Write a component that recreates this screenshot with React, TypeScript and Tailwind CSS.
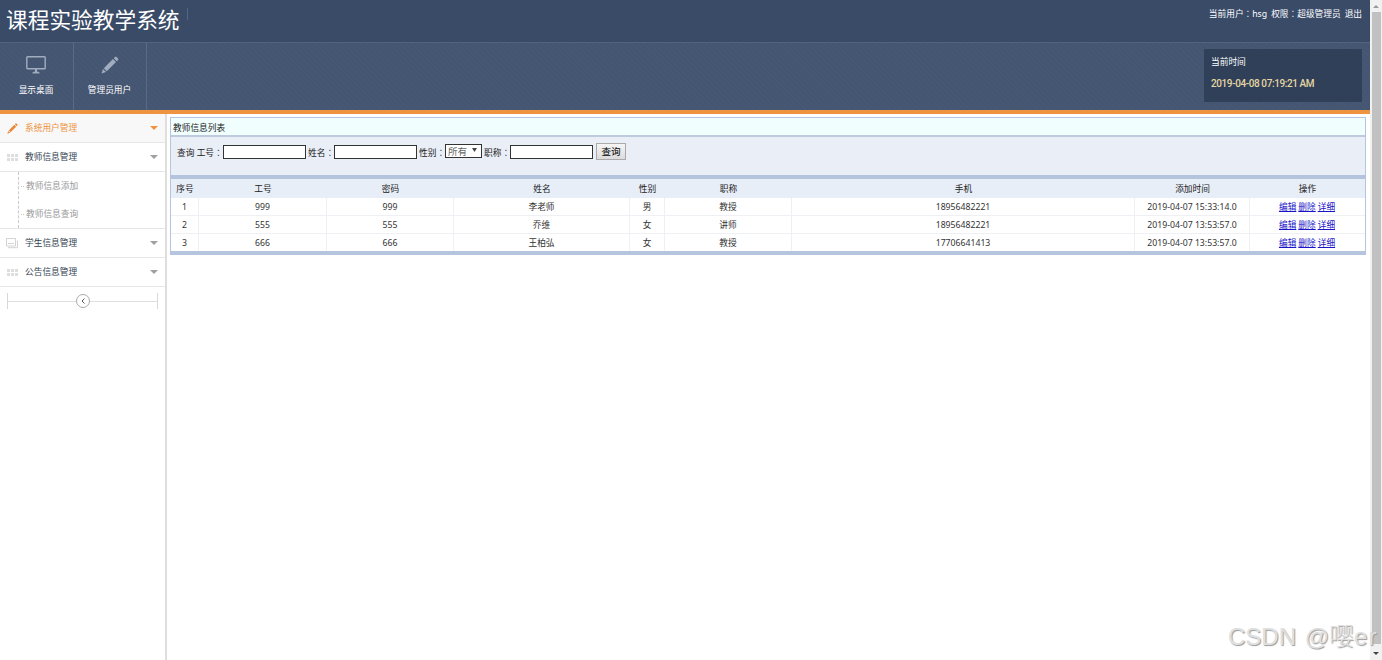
import React from "react";

type MenuIcon = "pencil" | "grid" | "stack";

type MenuItem = {
  label: string;
  icon: MenuIcon;
  active?: boolean;
  children?: string[];
};

const menu: MenuItem[] = [
  { label: "系统用户管理", icon: "pencil", active: true },
  { label: "教师信息管理", icon: "grid", children: ["教师信息添加", "教师信息查询"] },
  { label: "学生信息管理", icon: "stack" },
  { label: "公告信息管理", icon: "grid" },
];

const columns = ["序号", "工号", "密码", "姓名", "性别", "职称", "手机", "添加时间", "操作"];

const teachers = [
  ["1", "999", "999", "李老师", "男", "教授", "18956482221", "2019-04-07 15:33:14.0"],
  ["2", "555", "555", "乔维", "女", "讲师", "18956482221", "2019-04-07 13:53:57.0"],
  ["3", "666", "666", "王柏弘", "女", "教授", "17706641413", "2019-04-07 13:53:57.0"],
];

const rowGrid = "grid grid-cols-[28px_128px_127px_176px_35px_127px_343px_115px_115px]";

const Pencil: React.FC<{ className: string }> = ({ className }) => (
  <svg viewBox="0 0 18 18" className={className} fill="currentColor">
    <path d="M0.500 17.500l1.500-4.500 3 3z" />
    <path d="M2.800 12.200L12 3l3 3-9.200 9.200z" />
    <path d="M12.800 2.200l1.200-1.200c.5-.5 1.100-.5 1.600 0l1.400 1.400c.5.5.5 1.100 0 1.600l-1.200 1.200z" />
  </svg>
);

const Monitor = () => (
  <svg viewBox="0 0 20 18" className="h-[18px] w-5" fill="none" stroke="currentColor">
    <rect x="0.8" y="0.8" width="18.4" height="12" rx="0.8" strokeWidth="1.4" />
    <path d="M10 13v3" strokeWidth="2" />
    <path d="M6.500 17.200c0-1.200 2-1.400 3.500-1.400s3.500.2 3.500 1.400z" fill="currentColor" strokeWidth="0.4" />
  </svg>
);

const ItemIcon: React.FC<{ icon: MenuIcon }> = ({ icon }) => {
  if (icon === "pencil") return <Pencil className="ml-px size-[11px] text-[#e8893a]" />;
  if (icon === "grid") {
    return (
      <svg viewBox="0 0 11 7" className="ml-px h-[7px] w-[11px]" fill="#dedede">
        <path d="M0 0h3v3H0zM4 0h3v3H4zM8 0h3v3H8zM0 4h3v3H0zM4 4h3v3H4zM8 4h3v3H8z" />
      </svg>
    );
  }
  return (
    <svg viewBox="0 0 12 11" className="h-[11px] w-3" fill="none" stroke="#d3d3d3">
      <path d="M.5.5h9v7.500h-9zM2 9.700h9.500V2.500M2 5.500h6" />
    </svg>
  );
};

const Colon = () => <span className="font-['Noto_Sans_CJK_TC',sans-serif]">：</span>;

const Header = () => (
  <header className="h-[114px] border-b-4 border-[#ee9340] bg-[#455673] text-white">
    <div className="flex h-[42px] justify-between bg-[#3a4b68]">
      <div className="flex">
        <h1 className="ml-[6px] pt-1 text-[21.7px] leading-[31px] whitespace-nowrap">课程实验教学系统</h1>
        <div className="mt-2 ml-[7px] h-3 w-px bg-[#52668a]" />
      </div>
      <div className="flex gap-1 pt-2 pr-[8px] leading-3 whitespace-nowrap">
        <span>当前用户<Colon />hsg</span>
        <span>权限<Colon />超级管理员</span>
        <span>退出</span>
      </div>
    </div>
    <div className="flex h-[68px] justify-between border-t border-[#52637f] bg-[repeating-linear-gradient(45deg,#44556f_0px,#465876_2px,#44556f_4px)]">
      <nav className="flex">
        <a className="flex w-[74px] flex-col items-center border-r border-[#5a6a84] pt-[13px] pr-px text-[#a1adbf]">
          <Monitor />
          <span className="mt-[10px] leading-3 text-white">显示桌面</span>
        </a>
        <a className="flex w-[73px] flex-col items-center border-r border-[#5a6a84] pt-[13px] pr-px text-[#a1adbf]">
          <Pencil className="size-[18px]" />
          <span className="mt-[10px] leading-3 text-white">管理员用户</span>
        </a>
      </nav>
      <div className="mt-[6px] mr-2 h-[53px] w-[158px] bg-[#304059] pt-[7px] pl-[7px]">
        <p className="leading-3">当前时间</p>
        <p className="mt-[10px] font-['Roboto',sans-serif] text-[10px] leading-3 font-medium tracking-[-0.4px] text-[#e6d6a2]">
          2019-04-08 07:19:21 AM
        </p>
      </div>
    </div>
  </header>
);

const Sidebar = () => (
  <aside className="h-[546px] w-[167px] shrink-0 border-r-2 border-[#dedede]">
    {menu.map((item) => (
      <div key={item.label}>
        <div
          className={
            item.active
              ? "flex h-[29px] items-center border-b border-[#e6e6e6] bg-[#f8f8f8] pr-[7px] pl-[6px] text-[#ee9340]"
              : "flex h-[29px] items-center border-b border-[#e6e6e6] pr-[7px] pl-[6px] text-[#333f52]"
          }
        >
          <span className="w-[19px]"><ItemIcon icon={item.icon} /></span>
          <span className="flex-1 pt-[2px]">{item.label}</span>
          <svg viewBox="0 0 8 4" className={item.active ? "h-1 w-2" : "h-1 w-2 text-[#a0a0a0]"}>
            <path d="M0 0h8L4 4z" fill="currentColor" />
          </svg>
        </div>
        {item.children && (
          <div className="h-[57px] border-b border-[#e6e6e6] pl-[18px] text-[#999]">
            <ul className="h-full border-l border-dashed border-[#c8c8c8]">
              {item.children.map((child) => (
                <li key={child} className="flex h-7 items-center pt-px">
                  <span className="mr-[2px] ml-[2px] w-[3px] border-t border-dotted border-[#c8c8c8]" />
                  {child}
                </li>
              ))}
            </ul>
          </div>
        )}
      </div>
    ))}
    <div className="mx-[7px] mt-[6px] flex h-[16px] items-center border-x border-[#d8d8d8]">
      <div className="h-px flex-1 bg-[#e0e0e0]" />
      <div className="flex size-[14px] items-center justify-center rounded-full border border-[#aaa]">
        <svg viewBox="0 0 4 6" className="h-[6px] w-1" fill="none" stroke="#555">
          <path d="M3.500.5L1 3l2.500 2.500" />
        </svg>
      </div>
      <div className="h-px flex-1 bg-[#e0e0e0]" />
    </div>
  </aside>
);

const TextBox = () => <input className="block h-[14px] w-[83px] border border-[#333] bg-white px-1 outline-none" />;

const SearchBar = () => (
  <form className="flex h-[38px] items-start bg-[#e9eef7] pt-[6px] pl-[6px] whitespace-nowrap text-[#222]">
    <label className="mt-1 w-[46px] leading-3">查询 工号<Colon /></label>
    <div className="mt-[2px]"><TextBox /></div>
    <label className="mt-1 ml-[2px] w-[26px] leading-3">姓名<Colon /></label>
    <div className="mt-[2px]"><TextBox /></div>
    <label className="mt-1 ml-[2px] w-[26px] leading-3">性别<Colon /></label>
    <div className="mt-px flex h-[14px] w-[37px] items-center justify-between border border-[#333] bg-white pt-px pr-1 pl-[2px] text-[9.6px] leading-3 text-[#666]">
      所有
      <svg viewBox="0 0 5 4" className="mb-[3px] h-1 w-[5px]" fill="#444">
        <path d="M0 0h5L2.500 4z" />
      </svg>
    </div>
    <label className="mt-1 ml-[2px] w-[26px] leading-3">职称<Colon /></label>
    <div className="mt-[2px]"><TextBox /></div>
    <button
      type="button"
      className="ml-[3px] h-[17px] w-[30px] border border-[#aaa] bg-linear-to-b from-[#f5f5f5] to-[#dcdcdc] text-[9.6px] leading-[16px] text-black"
    >
      查询
    </button>
  </form>
);

const TeacherList = () => (
  <section className="mt-[3px] ml-[3px] h-[138px] w-[1196px] border-x border-t border-b-4 border-[#b4c5dd]">
    <h2 className="h-[19px] border-b-2 border-[#bdcbdc] bg-[#f0fffe] pl-[2px] leading-[20px] text-[#222]">教师信息列表</h2>
    <SearchBar />
    <div className="h-1 bg-[#b3c4dc]" />
    <div className={`${rowGrid} h-[19px] bg-[#e8eef8] text-center leading-[20px] text-[#222]`}>
      {columns.map((name) => (
        <div key={name}>{name}</div>
      ))}
    </div>
    {teachers.map((row) => (
      <div key={row[0]} className={`${rowGrid} h-[18px] border-b border-[#eef0f3] text-center leading-[19px] text-[#333] last:border-b-0`}>
        {row.map((cell, i) => (
          <div key={i} className="h-[17px] border-r border-[#eef0f3]">{cell}</div>
        ))}
        <div className="flex h-[17px] justify-center gap-[2px] pr-px text-[#1a14c8]">
          <a className="underline">编辑</a>
          <a className="underline">删除</a>
          <a className="underline">详细</a>
        </div>
      </div>
    ))}
  </section>
);

const ScrollBar = () => (
  <div className="flex h-[660px] w-3 flex-col items-center justify-between bg-[#f1f1f1] py-[5px]">
    <svg viewBox="0 0 6 3" className="h-[3px] w-[6px]" fill="#999">
      <path d="M0 3l3-3 3 3z" />
    </svg>
    <div className="mt-1 mb-2 w-[9px] flex-1 bg-[#c1c1c1]" />
    <svg viewBox="0 0 6 3" className="h-[3px] w-[6px]" fill="#444">
      <path d="M0 0l3 3 3-3z" />
    </svg>
  </div>
);

const App: React.FC = () => {
  return (
    <div className="relative flex h-[660px] w-[1382px] overflow-hidden bg-white font-['Noto_Sans','Noto_Sans_CJK_SC',sans-serif] text-[8.7px]">
      <div className="w-[1370px]">
        <Header />
        <div className="flex">
          <Sidebar />
          <TeacherList />
        </div>
      </div>
      <ScrollBar />
      <div className="absolute top-[621px] left-[1228px] font-['Liberation_Sans',sans-serif] text-[24px] leading-8 whitespace-nowrap text-[#e0e0e0] [text-shadow:1px_1px_1px_#999] [word-spacing:2px]">
        CSDN @<span className="font-['Noto_Sans_CJK_SC',sans-serif] text-[25px] leading-none font-light">嘤</span>
        <span className="tracking-[1px]">er</span>
      </div>
    </div>
  );
};

export default App;
